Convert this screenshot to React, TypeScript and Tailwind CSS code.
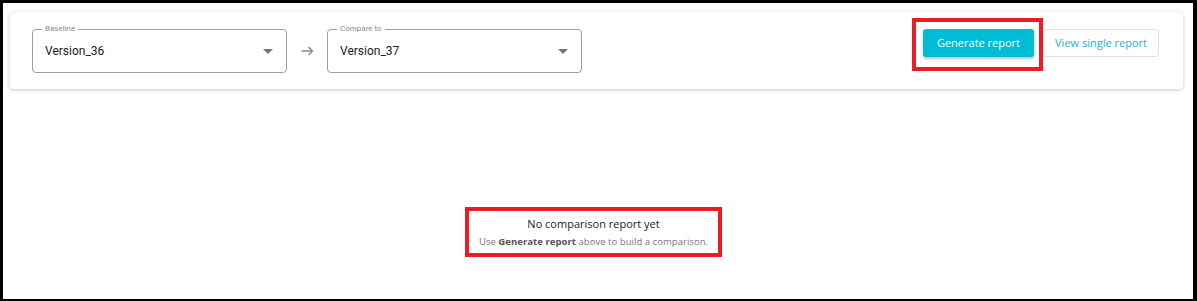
import React from 'react';

function SelectBox({ label, value }: { label: string; value: string }) {
  return (
    <div className="relative w-[255px] h-[44px] rounded-[4px] border border-[#9e9e9e] flex items-center pl-[12px] pr-[9px]">
      <span className="absolute -top-[7px] left-[9px] bg-white px-[3px] text-[8px] leading-[12px] text-[#8a8a8a] font-['Roboto',sans-serif]">
        {label}
      </span>
      <span className="flex-1 text-[12px] text-[#222] font-['Roboto',sans-serif]">{value}</span>
      <svg width="10" height="5" viewBox="0 0 10 5" className="mr-[4px]">
        <path d="M0 0 L10 0 L5 5 Z" fill="#757575" />
      </svg>
    </div>
  );
}

export default function App() {
  return (
    <div className="w-[1197px] h-[301px] bg-black pt-[3px] pl-[3px] pr-[4px] pb-[2px]">
      <div className="w-full h-full bg-white pt-[9px] pl-[7px] pr-[10px] font-['Open_Sans',sans-serif]">
        {/* toolbar card */}
        <div className="h-[77px] rounded-[4px] bg-white shadow-[0_1px_4px_rgba(0,0,0,0.22)] flex items-start pt-[17px] pl-[22px] pr-[24px]">
          <SelectBox label="Baseline" value="Version_36" />
          <div className="w-[40px] h-[44px] flex items-center justify-center">
            <svg width="13" height="10" viewBox="0 0 13 10">
              <path d="M0.5 5 H11.5 M7.5 1 L11.5 5 L7.5 9" stroke="#8a8a8a" strokeWidth="1.4" fill="none" />
            </svg>
          </div>
          <SelectBox label="Compare to" value="Version_37" />
          <div className="flex-1" />
          <div className="relative">
            <div className="absolute -left-[11px] -top-[11px] -right-[9px] -bottom-[14px] border-[4px] border-[#ed1c24]" />
            <button className="h-[28px] w-[111px] rounded-[3px] bg-[#00bcd4] text-white text-[11px] shadow-[0_2px_3px_rgba(0,0,0,0.25)]">
              Generate report
            </button>
          </div>
          <button className="ml-[9px] h-[28px] w-[116px] rounded-[3px] border border-[#e0e0e0] bg-white text-[#1ab3cb] text-[11px]">
            View single report
          </button>
        </div>

        {/* empty state */}
        <div className="flex justify-center pt-[118px] pr-[6px]">
          <div className="border-[4px] border-[#ed1c24] w-[257px] h-[50px] flex flex-col items-center pt-[5px] whitespace-nowrap">
            <div className="text-[11px] leading-[16px] text-[#222]">No comparison report yet</div>
            <div className="text-[9.6px] leading-[14px] text-[#777] mt-[3px]">
              Use <span className="font-bold text-[#555]">Generate report</span> above to build a comparison.
            </div>
          </div>
        </div>
      </div>
    </div>
  );
}
